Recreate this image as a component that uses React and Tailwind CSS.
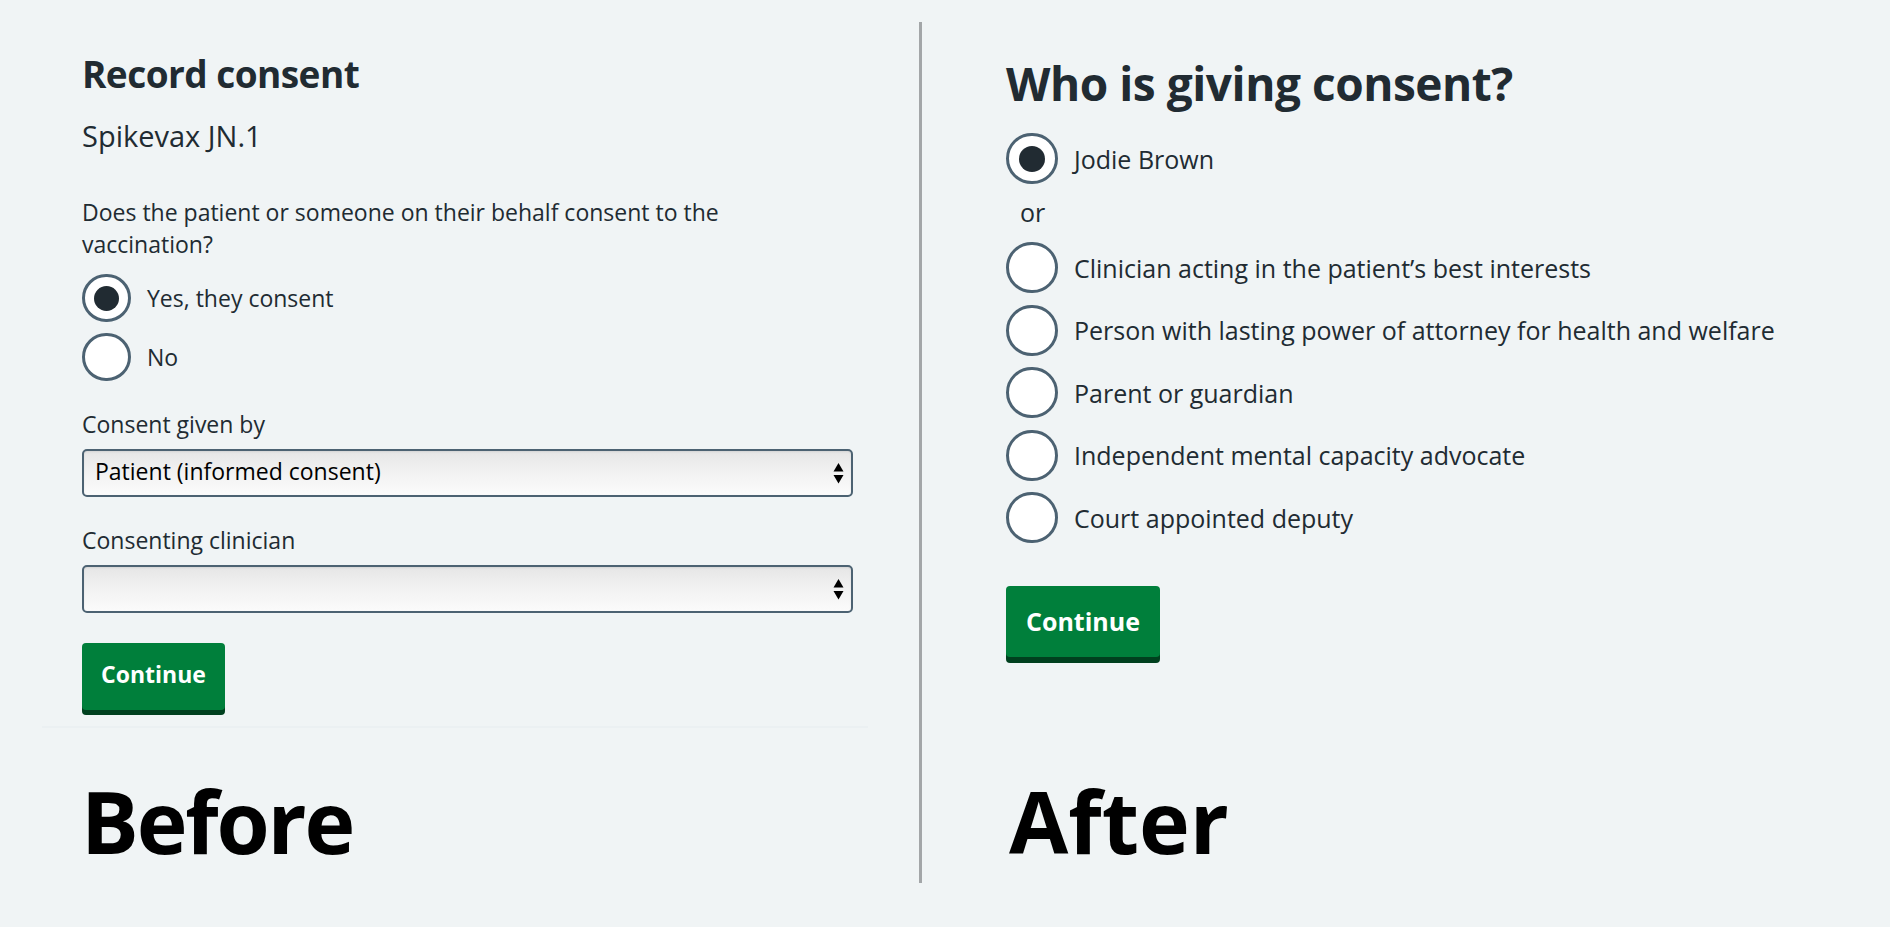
import React, { useState } from "react";

const font = { fontFamily: '"Open Sans", "Noto Sans", Arial, sans-serif' };

const Radio = ({ checked, size = "md", label, onClick }) => {
  const big = size === "lg";
  return (
    <div className="flex items-center cursor-pointer" onClick={onClick}>
      <span
        className={`flex items-center justify-center rounded-full bg-white border-[3px] border-[#4c6272] shrink-0 ${
          big ? "w-[52px] h-[51px]" : "w-[49px] h-[48px]"
        }`}
      >
        {checked && (
          <span
            className={`rounded-full bg-[#212b32] ${
              big ? "w-[26px] h-[26px]" : "w-[25px] h-[25px]"
            }`}
          ></span>
        )}
      </span>
      <span
        className={`text-[#212b32] ${
          big ? "ml-[16px] text-[25px] leading-[34px]" : "ml-[16px] text-[23px] leading-[32px]"
        }`}
      >
        {label}
      </span>
    </div>
  );
};

const SelectBox = ({ value }) => (
  <div className="relative w-[771px] h-[48px]">
    <select
      defaultValue={value}
      className="appearance-none w-full h-full rounded-[5px] border-2 border-[#4c6272] bg-gradient-to-b from-[#e6e6e6] via-[#f2f2f2] to-[#fbfbfb] pl-[11px] pb-[4px] text-[23px] text-black shadow-[inset_0_1px_2px_rgba(0,0,0,0.08)]"
    >
      <option value={value}>{value}</option>
    </select>
    {/* up/down arrows */}
    <svg
      className="absolute right-[9px] top-[14px] pointer-events-none"
      width="11"
      height="21"
      viewBox="0 0 11 21"
    >
      <path d="M5.5 0 L10.5 8.5 L0.5 8.5 Z" fill="#000" />
      <path d="M0.5 12 L10.5 12 L5.5 20.5 Z" fill="#000" />
    </svg>
  </div>
);

const Button = ({ big }) => (
  <button
    className={`self-start rounded-[4px] bg-[#007f3b] text-white font-bold ${
      big
        ? "w-[154px] h-[71px] text-[25px] shadow-[0_6px_0_#00401e]"
        : "w-[143px] h-[67px] pb-[4px] text-[23px] shadow-[0_5px_0_#00401e]"
    }`}
  >
    Continue
  </button>
);

export default function App() {
  const [consent, setConsent] = useState("yes");
  const [giver, setGiver] = useState("jodie");

  const others = [
    ["clinician", "Clinician acting in the patient’s best interests"],
    ["lpa", "Person with lasting power of attorney for health and welfare"],
    ["parent", "Parent or guardian"],
    ["imca", "Independent mental capacity advocate"],
    ["deputy", "Court appointed deputy"],
  ];

  return (
    <div className="w-full h-[927px] bg-[#f0f4f5] flex overflow-hidden" style={font}>
      {/* Before */}
      <div className="w-[919px] shrink-0 flex flex-col">
        <div className="pl-[82px] pt-[51px] flex flex-col text-[#212b32]">
          <h1 className="text-[37px] leading-[46px] font-bold tracking-[-0.015em]">Record consent</h1>
          <p className="mt-[23px] text-[29px] leading-[32px]">Spikevax JN.1</p>
          <p className="mt-[44px] text-[23px] leading-[32px] w-[700px]">
            Does the patient or someone on their behalf consent to the vaccination?
          </p>
          <div className="mt-[14px] flex flex-col gap-[11px]">
            <Radio label="Yes, they consent" checked={consent === "yes"} onClick={() => setConsent("yes")} />
            <Radio label="No" checked={consent === "no"} onClick={() => setConsent("no")} />
          </div>
          <label className="mt-[27px] text-[23px] leading-[32px]">Consent given by</label>
          <div className="mt-[9px]">
            <SelectBox value="Patient (informed consent)" />
          </div>
          <label className="mt-[27px] text-[23px] leading-[32px]">Consenting clinician</label>
          <div className="mt-[9px]">
            <SelectBox value="" />
          </div>
          <div className="mt-[30px] flex">
            <Button />
          </div>
        </div>
        <div className="mt-[16px] ml-[42px] w-[826px] h-[2px] bg-[#ebf0f2]"></div>
        <div className="pl-[81px] mt-[50px] text-[86px] leading-[86px] font-bold text-black tracking-[-0.025em]">
          Before
        </div>
      </div>

      {/* divider */}
      <div className="w-[3px] shrink-0 mt-[22px] h-[861px] bg-[#a3a6a8]"></div>

      {/* After */}
      <div className="flex-1 pl-[84px] pt-[56px] flex flex-col text-[#212b32]">
        <h1 className="text-[46px] leading-[55px] font-bold tracking-[-0.01em]">Who is giving consent?</h1>
        <div className="mt-[22px]">
          <Radio size="lg" label="Jodie Brown" checked={giver === "jodie"} onClick={() => setGiver("jodie")} />
        </div>
        <p className="mt-[11px] ml-[14px] text-[25px] leading-[34px]">or</p>
        <div className="mt-[13px] flex flex-col gap-[11.5px]">
          {others.map(([k, l]) => (
            <Radio key={k} size="lg" label={l} checked={giver === k} onClick={() => setGiver(k)} />
          ))}
        </div>
        <div className="mt-[43px] flex">
          <Button big />
        </div>
        <div className="mt-[121px] ml-[3px] text-[86px] leading-[86px] font-bold text-black">
          After
        </div>
      </div>
    </div>
  );
}
